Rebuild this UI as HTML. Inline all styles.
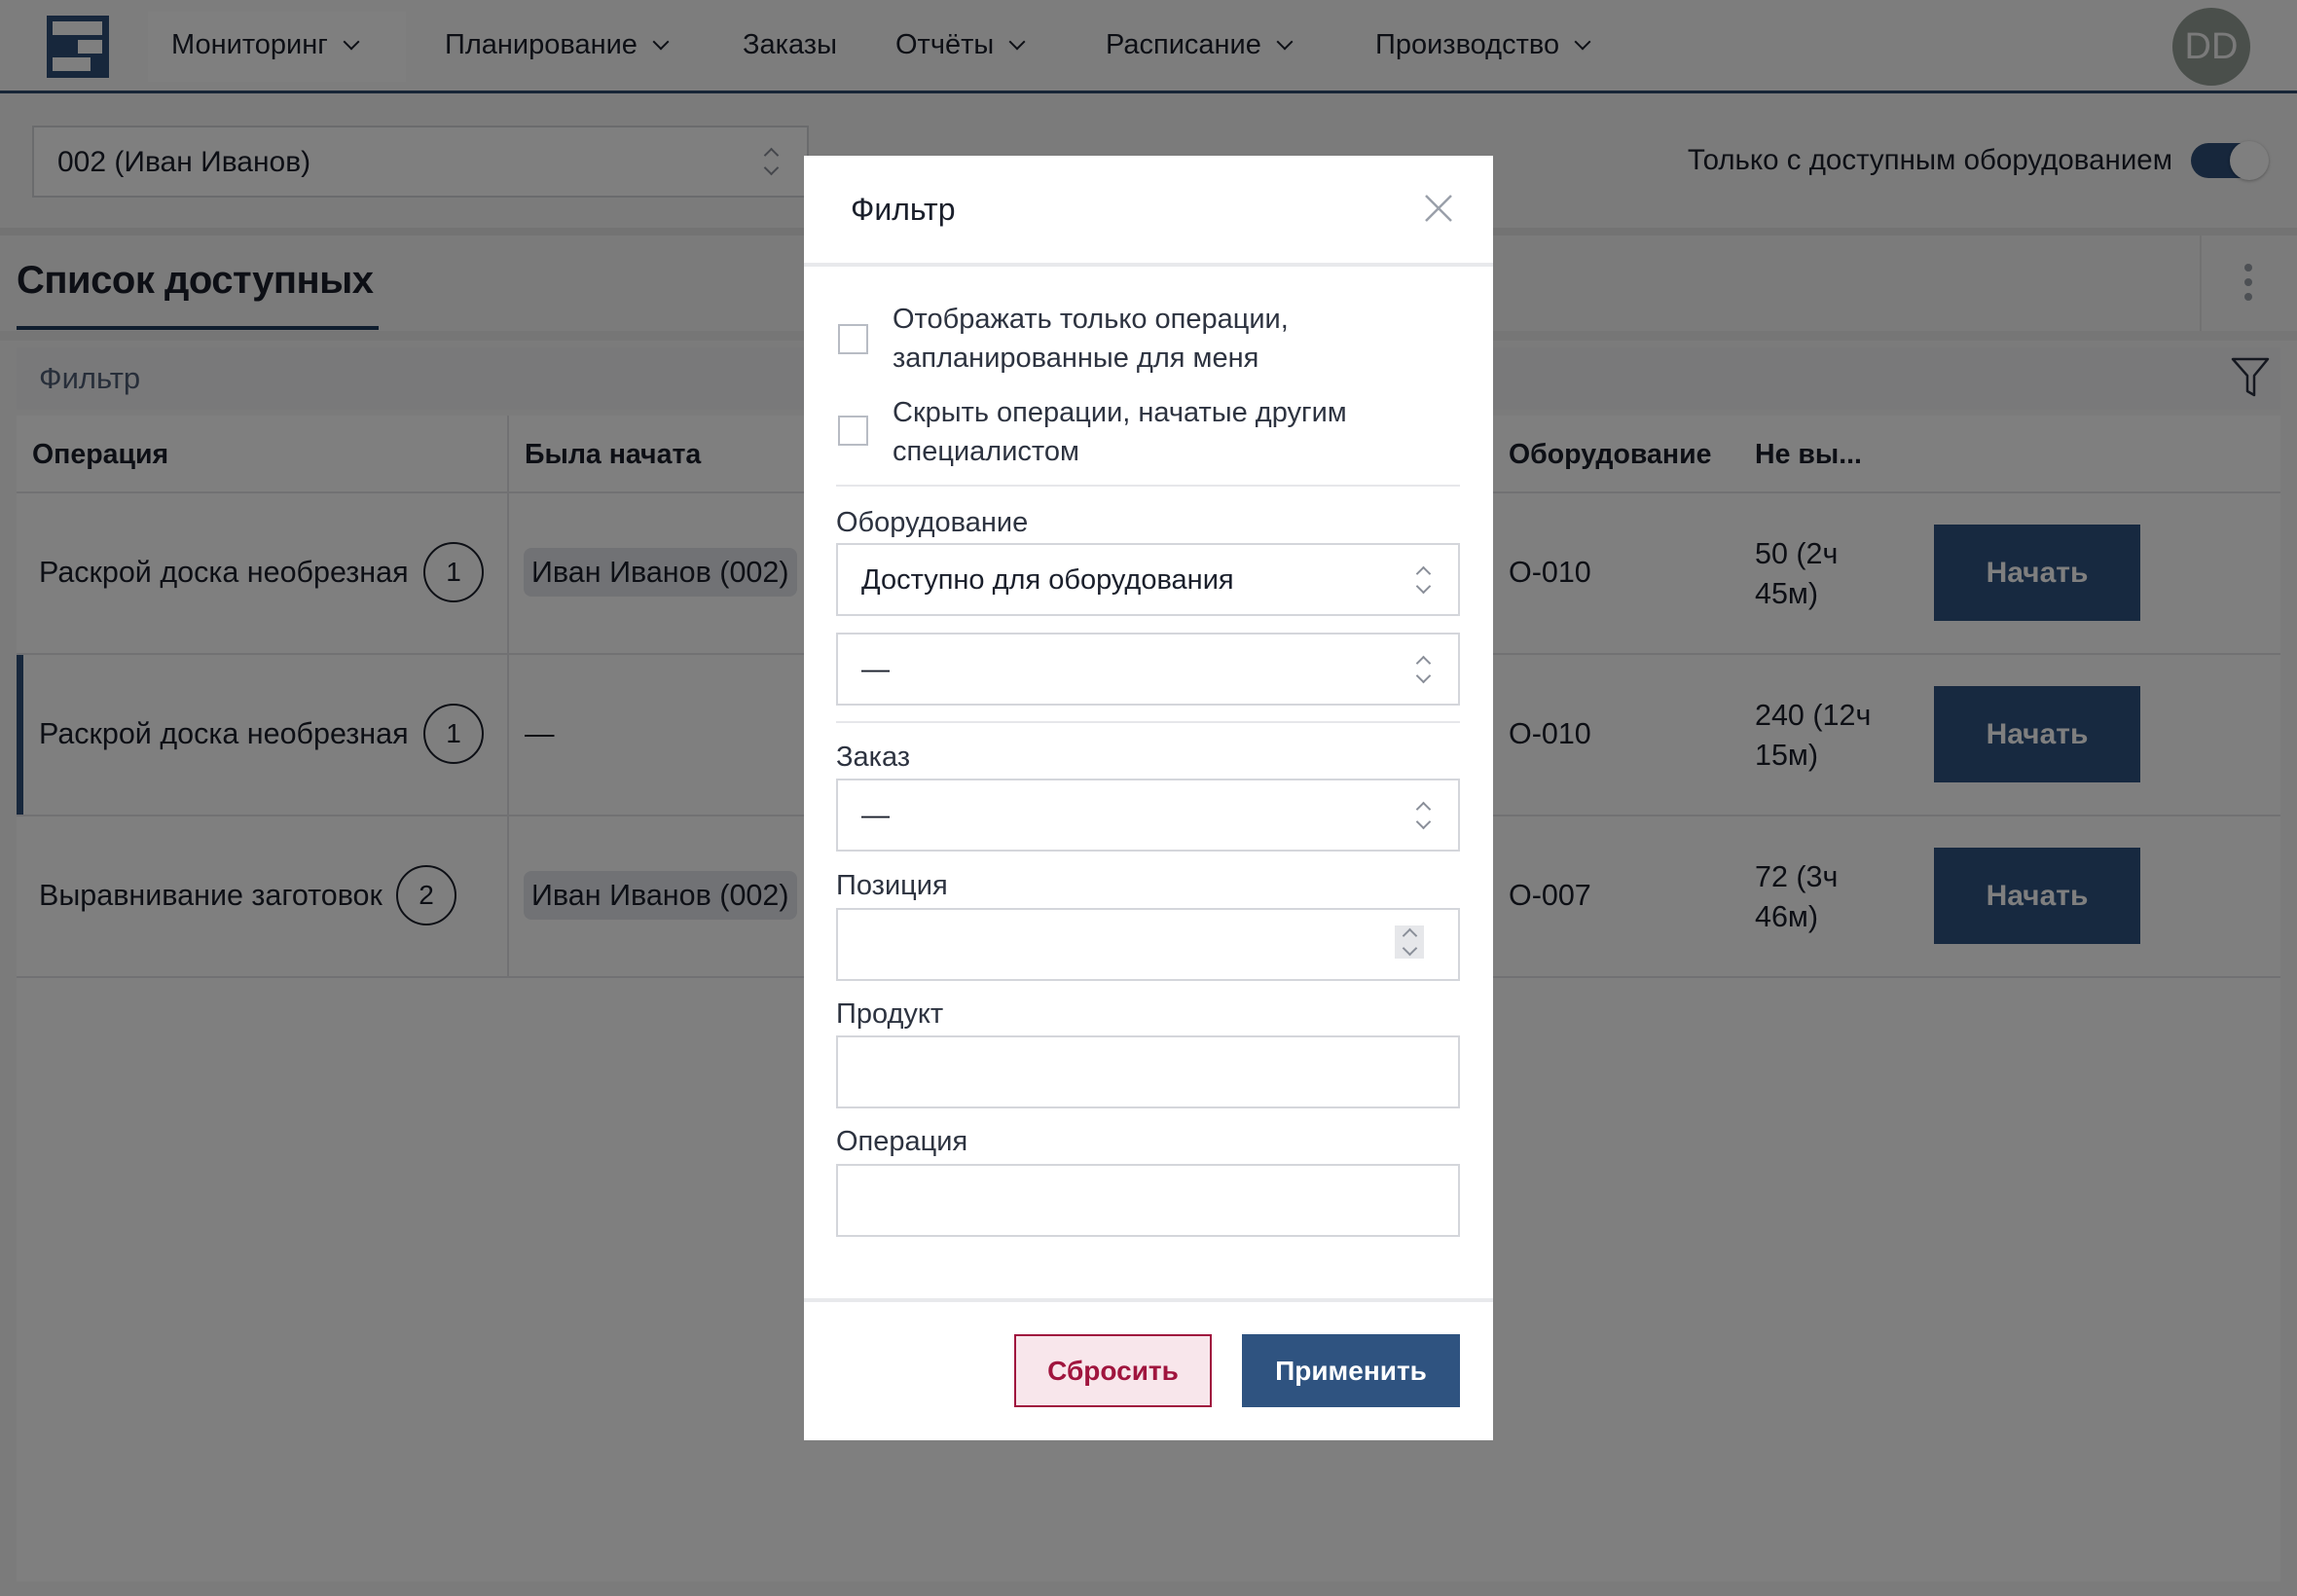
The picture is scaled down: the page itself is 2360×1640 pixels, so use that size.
<!DOCTYPE html>
<html><head><meta charset="utf-8"><style>
*{box-sizing:border-box;margin:0;padding:0}
body{width:2360px;height:1640px;position:relative;overflow:hidden;background:#f6f6f6;font-family:"Liberation Sans","Noto Sans CJK SC",sans-serif;color:#1a1f2b}
.a{position:absolute}
.nav{left:0;top:0;width:2360px;height:96px;background:#fbfbfb;border-bottom:3px solid #2e4a6e}
.ni{position:absolute;top:30px;font-size:29px;color:#1a1f2b}
.chev{display:inline-block;width:12px;height:12px;border-right:2.5px solid #1a1f2b;border-bottom:2.5px solid #1a1f2b;transform:rotate(45deg);margin-left:18px;position:relative;top:-6px}
.sel{background:#fff;border:2px solid #d4d6db}
.ud{position:absolute;width:14px;height:30px}
.ud:before,.ud:after{content:"";position:absolute;left:2px;width:9px;height:9px;border-left:2px solid #8a8f99;border-top:2px solid #8a8f99}
.ud:before{top:3px;transform:rotate(45deg)}
.ud:after{bottom:3px;transform:rotate(225deg)}
.td{font-size:30.5px;position:absolute}
.circ{position:absolute;width:62px;height:62px;border:2px solid #1a1f2b;border-radius:50%;text-align:center;line-height:58px;font-size:28px}
.chip{position:absolute;background:#e3e5ea;border-radius:8px;padding:0 8px;height:50px;line-height:50px;font-size:30.5px}
.btn{position:absolute;left:1987px;width:212px;height:99px;background:#2f5380;color:#fff;font-size:30px;font-weight:bold;text-align:center;line-height:99px}
.ov{left:0;top:0;width:2360px;height:1640px;background:rgba(0,0,0,.5)}
.m{left:826px;top:160px;width:708px;height:1320px;background:#fff}
.lbl{position:absolute;left:33px;font-size:29px;color:#2d3340}
.in{position:absolute;left:33px;width:641px;height:75px;border:2px solid #d4d6db;background:#fff}
.cb{position:absolute;left:35px;width:31px;height:31px;border:2px solid #b8bcc4}
.ct{position:absolute;left:91px;font-size:29px;line-height:40px;color:#2d3340}
</style></head><body>
<div class="a nav">
  <div class="a" style="left:48px;top:16px;width:64px;height:64px;background:#2e4e78">
    <div class="a" style="left:6px;top:6px;width:51px;height:14px;background:#fff"></div>
    <div class="a" style="left:32px;top:25px;width:25px;height:14px;background:#fff"></div>
    <div class="a" style="left:6px;top:43px;width:39px;height:14px;background:#fff"></div>
  </div>
  <div class="a" style="left:152px;top:12px;width:265px;height:72px;background:#fff"></div>
  <div class="ni" style="left:176px">Мониторинг<span class="chev"></span></div>
  <div class="ni" style="left:457px">Планирование<span class="chev"></span></div>
  <div class="ni" style="left:763px">Заказы</div>
  <div class="ni" style="left:920px">Отчёты<span class="chev"></span></div>
  <div class="ni" style="left:1136px">Расписание<span class="chev"></span></div>
  <div class="ni" style="left:1413px">Производство<span class="chev"></span></div>
  <div class="a" style="left:2232px;top:8px;width:80px;height:80px;border-radius:50%;background:#949e96;color:#f5f5f5;font-size:38px;text-align:center;line-height:80px">DD</div>
</div>
<div class="a sel" style="left:33px;top:129px;width:798px;height:74px"><div class="a" style="left:24px;top:19px;font-size:30px">002 (Иван Иванов)</div><div class="ud" style="left:750px;top:20px"></div></div>
<div class="a" style="right:128px;top:148px;font-size:29.5px">Только с доступным оборудованием</div>
<div class="a" style="left:2251px;top:147px;width:76px;height:36px;border-radius:18px;background:#2e4e78"></div>
<div class="a" style="left:2291px;top:145px;width:40px;height:40px;border-radius:50%;background:#fff;box-shadow:0 1px 3px rgba(0,0,0,.3)"></div>
<div class="a" style="left:0;top:234px;width:2360px;height:8px;background:#e6e6e6"></div>
<div class="a" style="left:0;top:242px;width:2360px;height:100px;background:#f6f6f6"></div>
<div class="a" style="left:17px;top:266px;font-size:40px;font-weight:bold;color:#1a1f2b;letter-spacing:-0.5px">Список доступных</div>
<div class="a" style="left:17px;top:335px;width:372px;height:4px;background:#1f3a5c"></div>
<div class="a" style="left:0;top:340px;width:2360px;height:10px;background:#ececec"></div>
<div class="a" style="left:2260px;top:242px;width:2px;height:98px;background:#e4e4e4"></div>
<div class="a" style="left:2306px;top:271px;width:8px;height:8px;border-radius:50%;background:#9aa0a8"></div>
<div class="a" style="left:2306px;top:286px;width:8px;height:8px;border-radius:50%;background:#9aa0a8"></div>
<div class="a" style="left:2306px;top:301px;width:8px;height:8px;border-radius:50%;background:#9aa0a8"></div>
<div class="a" style="left:17px;top:357px;width:2326px;height:64px;background:#f2f3f5"></div>
<div class="a" style="left:40px;top:371px;font-size:31px;color:#4f5d75">Фильтр</div>
<svg class="a" style="left:2292px;top:366px" width="40" height="44" viewBox="0 0 40 44"><path d="M2 3 H38 L24 20 V40 L17 36 V20 Z" fill="none" stroke="#2a3140" stroke-width="2.5" stroke-linejoin="round"/></svg>
<div class="a" style="left:17px;top:427px;width:2326px;height:1198px;background:#fff"></div>
<div class="a" style="left:17px;top:505px;width:2326px;height:2px;background:#e2e3e6"></div>
<div class="a" style="left:17px;top:671px;width:2326px;height:2px;background:#e2e3e6"></div>
<div class="a" style="left:17px;top:837px;width:2326px;height:2px;background:#e2e3e6"></div>
<div class="a" style="left:17px;top:1003px;width:2326px;height:2px;background:#e2e3e6"></div>
<div class="a" style="left:521px;top:427px;width:2px;height:577px;background:#e2e3e6"></div>
<div class="a" style="left:17px;top:673px;width:7px;height:164px;background:#2e4e78"></div>
<div class="td" style="left:33px;top:451px;font-weight:bold;font-size:28.5px">Операция</div>
<div class="td" style="left:539px;top:451px;font-weight:bold;font-size:28.5px">Была начата</div>
<div class="td" style="left:1550px;top:451px;font-weight:bold;font-size:28.5px">Оборудование</div>
<div class="td" style="left:1803px;top:451px;font-weight:bold;font-size:28.5px">Не вы...</div>
<div class="td" style="left:40px;top:571px">Раскрой доска необрезная</div><div class="circ" style="left:435px;top:557px">1</div>
<div class="chip" style="left:538px;top:563px">Иван Иванов (002)</div>
<div class="td" style="left:1550px;top:571px">О-010</div>
<div class="td" style="left:1803px;top:549px;line-height:41px">50 (2ч<br>45м)</div>
<div class="btn" style="top:539px">Начать</div>
<div class="td" style="left:40px;top:737px">Раскрой доска необрезная</div><div class="circ" style="left:435px;top:723px">1</div>
<div class="td" style="left:539px;top:737px">—</div>
<div class="td" style="left:1550px;top:737px">О-010</div>
<div class="td" style="left:1803px;top:715px;line-height:41px">240 (12ч<br>15м)</div>
<div class="btn" style="top:705px">Начать</div>
<div class="td" style="left:40px;top:903px">Выравнивание заготовок</div><div class="circ" style="left:407px;top:889px">2</div>
<div class="chip" style="left:538px;top:895px">Иван Иванов (002)</div>
<div class="td" style="left:1550px;top:903px">О-007</div>
<div class="td" style="left:1803px;top:881px;line-height:41px">72 (3ч<br>46м)</div>
<div class="btn" style="top:871px">Начать</div>
<div class="a ov"></div>
<div class="a m">
  <div class="a" style="left:48px;top:37px;font-size:32px;color:#1a1f2b">Фильтр</div>
  <svg class="a" style="left:636px;top:38px" width="32" height="32" viewBox="0 0 32 32"><path d="M3 3L29 29M29 3L3 29" stroke="#9aa0aa" stroke-width="2.5"/></svg>
  <div class="a" style="left:0;top:110px;width:708px;height:4px;background:#e8e9ec"></div>
  <div class="cb" style="top:173px"></div>
  <div class="ct" style="top:148px">Отображать только операции,<br>запланированные для меня</div>
  <div class="cb" style="top:267px"></div>
  <div class="ct" style="top:244px">Скрыть операции, начатые другим<br>специалистом</div>
  <div class="a" style="left:33px;top:338px;width:641px;height:2px;background:#e6e7ea"></div>
  <div class="lbl" style="top:361px">Оборудование</div>
  <div class="in" style="top:398px"><div class="a" style="left:24px;top:20px;font-size:29px;color:#1a1f2b">Доступно для оборудования</div><div class="ud" style="left:594px;top:21px"></div></div>
  <div class="in" style="top:490px"><div class="a" style="left:24px;top:20px;font-size:29px">—</div><div class="ud" style="left:594px;top:21px"></div></div>
  <div class="a" style="left:33px;top:581px;width:641px;height:2px;background:#e6e7ea"></div>
  <div class="lbl" style="top:602px">Заказ</div>
  <div class="in" style="top:640px"><div class="a" style="left:24px;top:20px;font-size:29px">—</div><div class="ud" style="left:594px;top:21px"></div></div>
  <div class="lbl" style="top:734px">Позиция</div>
  <div class="in" style="top:773px"><div class="a" style="left:572px;top:16px;width:30px;height:34px;background:#e6e7ea"></div><div class="ud" style="left:580px;top:18px"></div></div>
  <div class="lbl" style="top:866px">Продукт</div>
  <div class="in" style="top:904px"></div>
  <div class="lbl" style="top:997px">Операция</div>
  <div class="in" style="top:1036px"></div>
  <div class="a" style="left:0;top:1174px;width:708px;height:4px;background:#e8e9ec"></div>
  <div class="a" style="left:216px;top:1211px;width:203px;height:75px;border:2px solid #a0153e;background:#f8e6eb;color:#a0153e;font-size:28px;text-align:center;line-height:71px;font-weight:bold">Сбросить</div>
  <div class="a" style="left:450px;top:1211px;width:224px;height:75px;background:#2f5380;color:#fff;font-size:28px;text-align:center;line-height:75px;font-weight:bold">Применить</div>
</div>
</body></html>
